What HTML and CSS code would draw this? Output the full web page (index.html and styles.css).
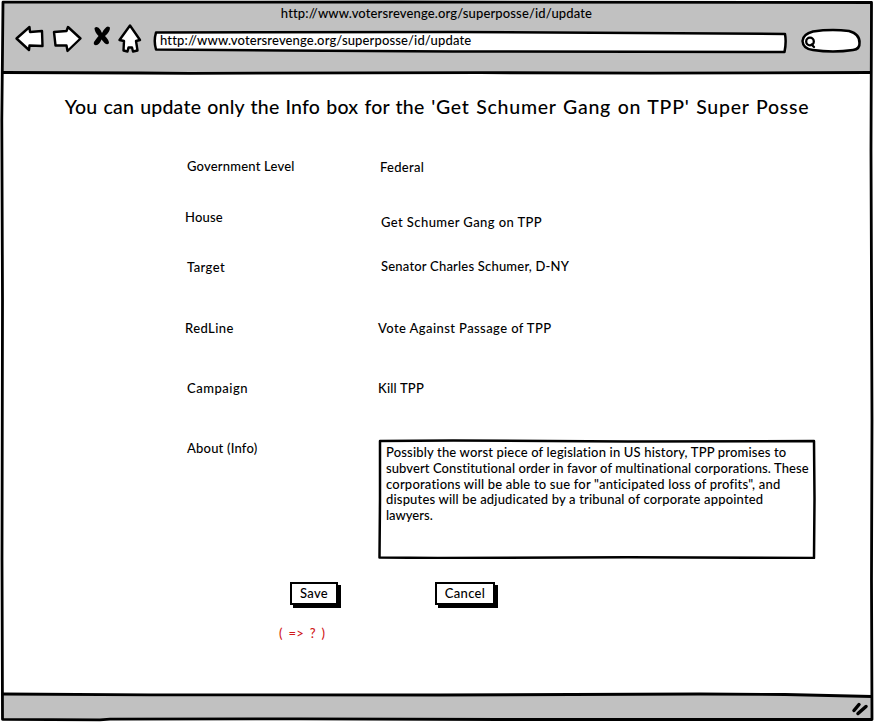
FILE: index.html
```html
<!DOCTYPE html>
<html lang="en">
<head>
<meta charset="utf-8">
<title>Update Super Posse</title>
<link rel="stylesheet" href="styles.css">
</head>
<body>
<div class="window">
  <svg class="frame" width="874" height="722" viewBox="0 0 874 722" aria-hidden="true">
    <path class="bar" d="M3 2.500L871 2V73L3 72.500Z"/>
    <path class="bar" d="M3 694L440 695L780 694L872 696.500V720L3 719.500Z"/>
    <path class="line" d="M3 2.200L400 2L871.500 2.500L871 150L872 420L871.500 580L872 719.500L500 719.500L300 718.800L110 719.200L100 719.800L2.500 719.300L2 560L2.500 300L1.800 120Z"/>
    <path class="line" d="M3 72.500L140 73L190 73.300L480 72.700L650 73.100L871 72.500"/>
    <path class="line" d="M3 694L150 694.800L440 695L700 694L785 694.500L872 696.500"/>
    <path class="grip" d="M854 710.500L859 704.500M858 713.500L866 706.500"/>
  </svg>
  <header class="chrome">
    <div class="title"><span class="url">http://www.votersrevenge.org/superposse/id/update</span></div>
    <div class="toolbar">
      <svg class="nav" width="130" height="36" viewBox="0 0 130 36" aria-hidden="true">
        <path class="ico" d="M2.500 16.500L15.500 5L16 10L28 9L28.500 24L15.500 23.500L15 28Z"/>
        <path class="ico" d="M40 10L52.500 9L54 5L66.500 16.500L53.500 29L52.500 23.500L41.500 23.500Z"/>
        <path class="petal" d="M80.500 6Q83.500 3.500 86.500 8L88 11Q91 5 94 4.500L96 5.500Q96 10 91 14Q95 18 95 21Q93.500 23.500 90.500 21L87.500 17.500Q85.500 22.500 82 23.300Q79 23 80 20Q82 17 84.500 14Q80.500 10 80.500 6Z"/>
        <path class="ico" d="M116 3.500L126 18L122 19L123.500 28.500L119 29.500L118 25.500H114.500L113.500 29.500L109.500 28.500L110 19L105.500 18Z"/>
      </svg>
      <div class="address">
        <svg class="shape" width="634" height="24" viewBox="0 0 634 24" aria-hidden="true">
          <path class="field" d="M3 2.500L300 2L632 4Q633.500 12 631.500 22L300 21.500L130 20.500L3 19.500Q.5 11 3 2.500Z"/>
        </svg>
        <span class="url">http://www.votersrevenge.org/superposse/id/update</span>
      </div>
      <svg class="search" width="62" height="28" viewBox="0 0 62 28" aria-hidden="true">
        <path class="field" d="M13 4.500Q31 2 49 4Q60 7 59.500 16Q60 22 53 23Q33 26 13 23Q3 22 2.500 14Q3 7 13 4.500Z"/>
        <circle class="lens" cx="10" cy="14.500" r="3.800"/>
        <path class="lens" d="M11.500 17.500L14 20"/>
      </svg>
    </div>
  </header>
  <main>
    <h1><span class="lead">You can update only the Info box for the</span> 'Get Schumer Gang on TPP' Super Posse</h1>
    <dl class="details">
      <dt class="in2 snug">Government Level</dt><dd class="in2 dn1">Federal</dd>
      <dt class="snug">House</dt><dd class="in3 dn5 loose">Get Schumer Gang on TPP</dd>
      <dt class="in2 loose">Target</dt><dd class="in3 up1 snug">Senator Charles Schumer, D-NY</dd>
      <dt class="loose">RedLine</dt><dd class="loose">Vote Against Passage of TPP</dd>
      <dt class="in2 looser">Campaign</dt><dd class="snug">Kill TPP</dd>
      <dt class="in2 snug">About (Info)</dt>
      <dd class="info">
        <svg class="shape" width="438" height="120" viewBox="0 0 438 120" aria-hidden="true">
          <path class="field" d="M2 2L75 1.500L250 2.500L436 2L436.500 60L436 119L250 118.300L60 119L1.500 118.500L2 60Z"/>
        </svg>
        <p>Possibly the worst piece of legislation in US history, TPP promises to<br><span class="tight">subvert Constitutional order in favor of multinational corporations. These</span><br><span class="snug">corporations will be able to sue for "anticipated loss of profits", and</span><br><span class="even">disputes will be adjudicated by a tribunal of corporate appointed</span><br><span class="closest">lawyers.</span></p>
      </dd>
    </dl>
    <div class="actions">
      <button class="save">Save</button>
      <button class="cancel">Cancel</button>
    </div>
    <p class="note">( =&gt; ? )</p>
  </main>
</div>
</body>
</html>
```
FILE: styles.css
```css
* { box-sizing: border-box; }
body { margin: 0; background: #fff; color: #000; font: 500 13px/16px Lato, "Open Sans", sans-serif; letter-spacing: .3px; }
.window { position: relative; width: 874px; height: 722px; overflow: hidden; }
.frame, .shape { position: absolute; left: 0; top: 0; }
.bar { fill: #c1c1c1; }
.line { fill: none; stroke: #000; stroke-width: 2.800; stroke-linejoin: round; }
.grip { stroke: #000; stroke-width: 3.500; stroke-linecap: round; }
.ico { fill: #fff; stroke: #000; stroke-width: 2.400; stroke-linejoin: round; }
.petal { fill: #000; }
.field { fill: #fff; stroke: #000; stroke-width: 2.500; stroke-linejoin: round; }
.lens { fill: none; stroke: #000; stroke-width: 2.300; stroke-linecap: round; }
.url { letter-spacing: .14px; }
.closest { letter-spacing: 0; }
.tight { letter-spacing: .09px; }
.even { letter-spacing: .17px; }
.snug { letter-spacing: .2px; }
.loose { letter-spacing: .41px; }
.looser { letter-spacing: .53px; }
.chrome { position: relative; height: 73px; padding-top: 5px; }
.title { text-align: center; padding-right: 1px; white-space: nowrap; }
.toolbar { display: flex; padding: 1px 0 0 14px; }
.nav { display: block; margin-right: 9px; }
.address { position: relative; width: 634px; height: 24px; margin-top: 8px; padding: 2px 0 0 7px; }
.address span { position: relative; }
.search { margin: 5px 0 0 13px; }
main { position: relative; }
h1 { margin: 0; padding-top: 22px; font-size: 19.500px; line-height: 24px; font-weight: 500; letter-spacing: .75px; word-spacing: 1px; text-align: center; white-space: nowrap; }
.lead { letter-spacing: .2px; }
.details { display: grid; grid-template-columns: 193px 438px; grid-template-rows: 51px 50px 61px 60px 60px 120px; margin: 39px 0 0 185px; white-space: nowrap; }
dd { margin: 0; }
.in2 { padding-left: 2px; }
.in3 { padding-left: 3px; }
.dn1 { padding-top: 1px; }
.dn5 { padding-top: 5px; }
.up1 { margin-top: -1px; }
.info { position: relative; margin-top: -1px; }
.info p { position: relative; margin: 0; padding: 6px 0 0 8px; line-height: 15.800px; letter-spacing: .17px; }
.actions { display: flex; gap: 97px; margin: 22px 0 0 290px; }
button { height: 23px; padding: 0 0 1px; border: 2px solid #000; background: #fff; box-shadow: 3px 3px 0 #000; font: inherit; color: inherit; letter-spacing: inherit; }
.save { width: 48px; }
.cancel { width: 60px; }
.note { margin: 20px 0 0 279px; color: #d01818; word-spacing: 2px; }
```
